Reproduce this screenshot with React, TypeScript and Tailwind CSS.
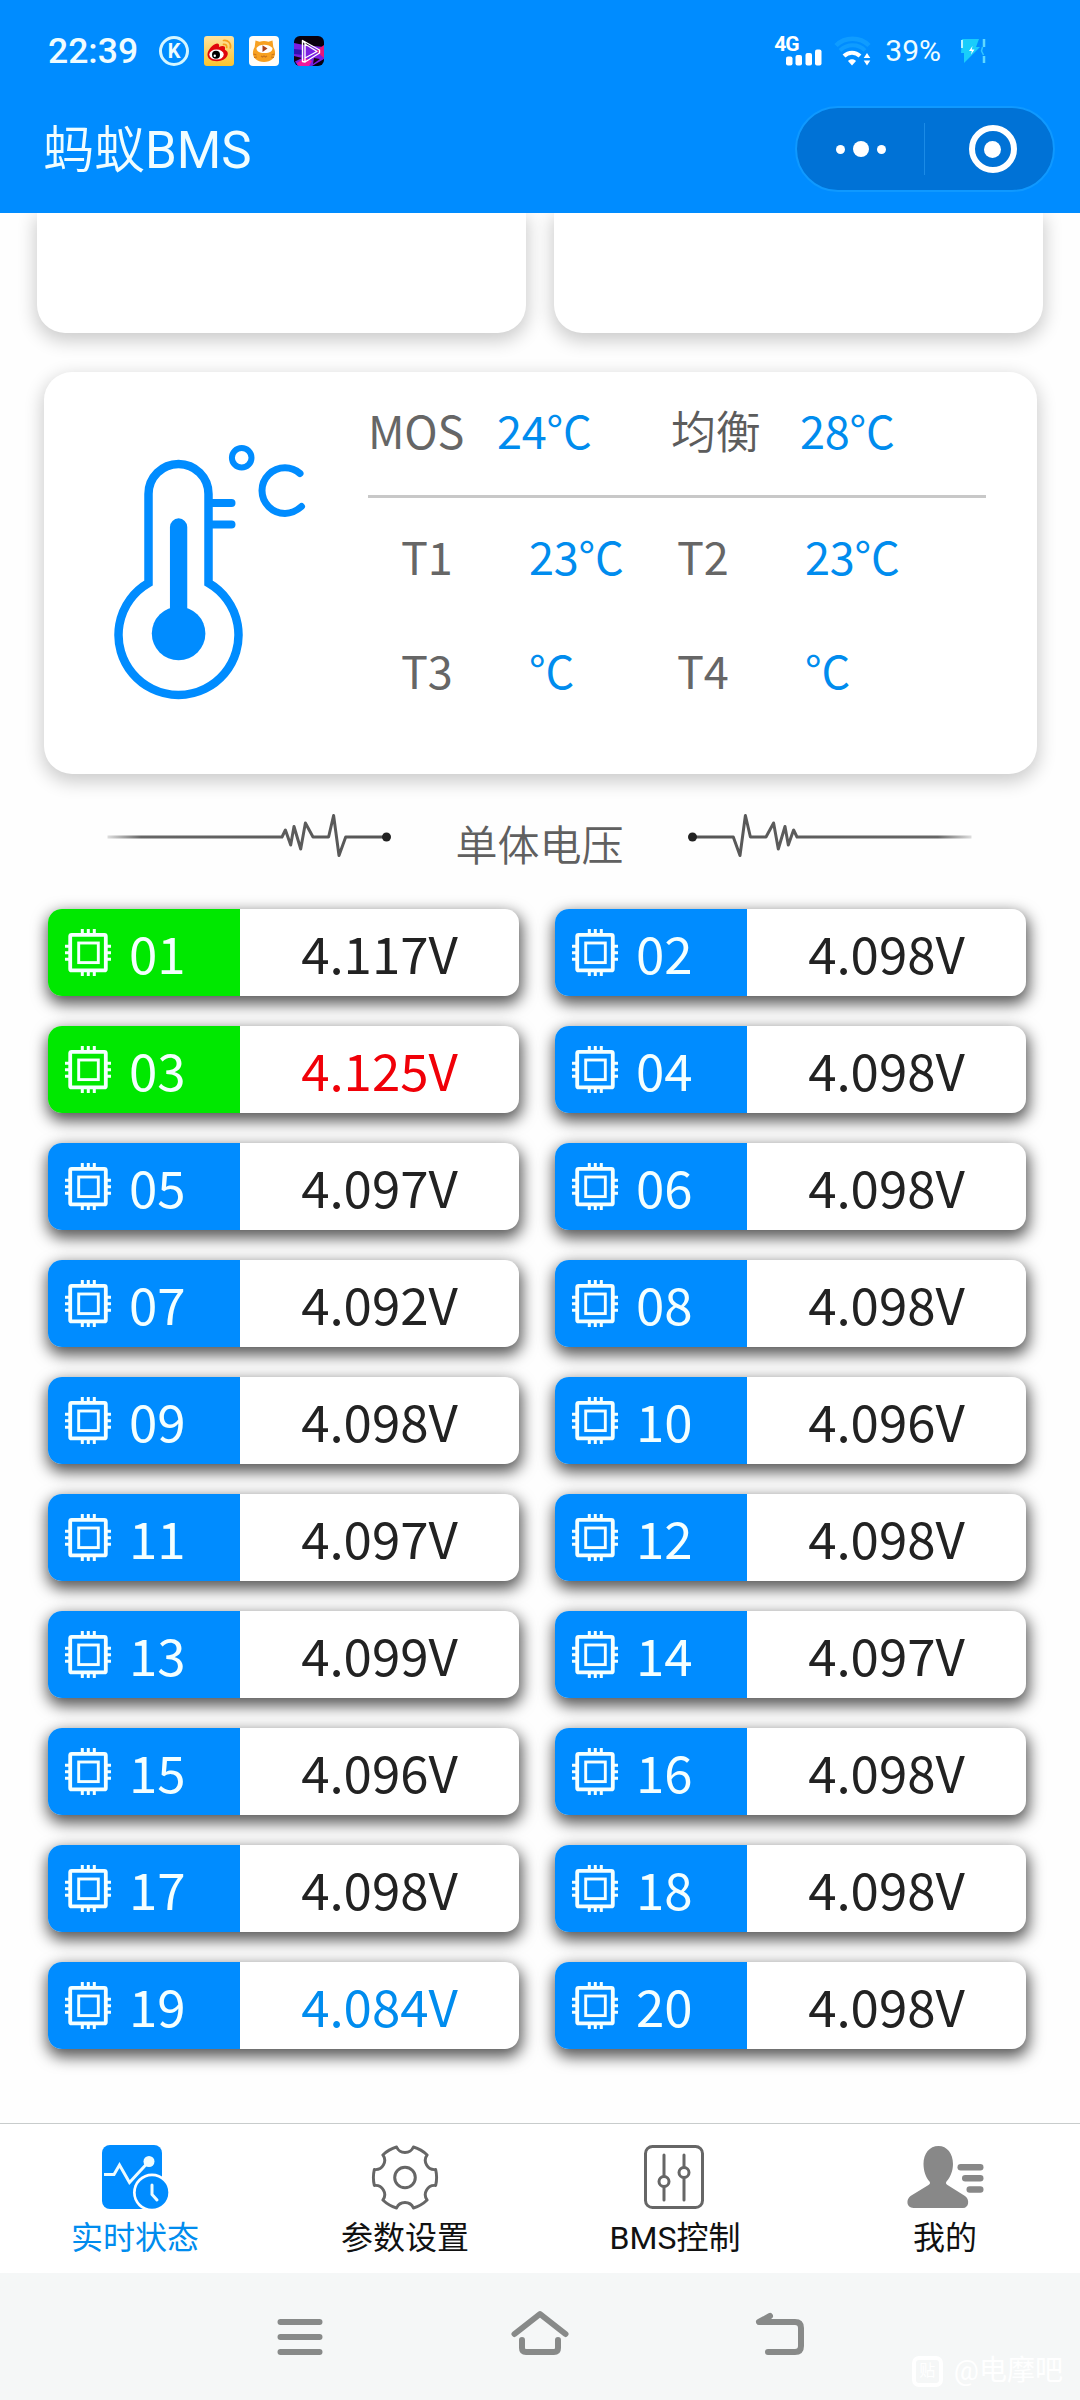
import React from "react";

type Tone = "normal" | "max" | "min";

type Cell = {
  id: string;
  voltage: string;
  balancing?: boolean;
  tone?: Tone;
};

const cells: Cell[] = [
  { id: "01", voltage: "4.117V", balancing: true },
  { id: "02", voltage: "4.098V" },
  { id: "03", voltage: "4.125V", balancing: true, tone: "max" },
  { id: "04", voltage: "4.098V" },
  { id: "05", voltage: "4.097V" },
  { id: "06", voltage: "4.098V" },
  { id: "07", voltage: "4.092V" },
  { id: "08", voltage: "4.098V" },
  { id: "09", voltage: "4.098V" },
  { id: "10", voltage: "4.096V" },
  { id: "11", voltage: "4.097V" },
  { id: "12", voltage: "4.098V" },
  { id: "13", voltage: "4.099V" },
  { id: "14", voltage: "4.097V" },
  { id: "15", voltage: "4.096V" },
  { id: "16", voltage: "4.098V" },
  { id: "17", voltage: "4.098V" },
  { id: "18", voltage: "4.098V" },
  { id: "19", voltage: "4.084V", tone: "min" },
  { id: "20", voltage: "4.098V" },
];

const toneClass: Record<Tone, string> = {
  normal: "text-[#222222]",
  max: "text-[#f00008]",
  min: "text-[#008cee]",
};

const WeiboIcon = () => (
  <svg width="30" height="30" viewBox="0 0 30 30">
    <defs>
      <linearGradient id="weibo" x1="0" y1="0" x2="0" y2="1">
        <stop offset="0" stopColor="#fde3a0" />
        <stop offset="1" stopColor="#fbc42c" />
      </linearGradient>
    </defs>
    <rect width="30" height="30" rx="3" fill="url(#weibo)" />
    <path
      d="M3.500 18.500C3.500 14 9 8 13 7.500c2 0 2.500 1.500 2 3.500 3-1.500 6.500-1.500 6 1.500-.2 1-.2 1.500 1 2C26 16.500 23.500 25 13 25.200 7 25.200 3.500 22.500 3.500 18.500Z"
      fill="#e0060c"
    />
    <ellipse cx="12.500" cy="18.600" rx="7.200" ry="5" fill="#fff" />
    <circle cx="12" cy="18.800" r="4" fill="#000" />
    <circle cx="10.800" cy="19.800" r="1.200" fill="#fff" />
    <path
      d="M19.500 4.500c4.500-.8 8 3 6.800 7.500M19.500 8.300c2-.3 3.600 1 3.200 3.200"
      fill="none"
      stroke="#f5a01c"
      strokeWidth="1.700"
      strokeLinecap="round"
    />
  </svg>
);

const CatIcon = () => (
  <svg width="30" height="30" viewBox="0 0 30 30">
    <rect width="30" height="30" rx="4" fill="#fffdf8" />
    <path
      d="M6.500 4.500l4 1.200c3-1 6-1 9 0l4-1.200.8 6.500c2.500 4 2.500 9-.8 12-4 4-13 4-17 0-3.300-3-3.300-8-.8-12Z"
      fill="#f7a01f"
    />
    <path d="M7.500 12C10 7.500 20 7.500 23.500 12 23.500 15.500 21 17 15.500 17S7.500 15.500 7.500 12Z" fill="#fff" />
    <path d="M13.500 9.200l5 3.300-5 3.400Z" fill="#a8401c" />
    <path
      d="M4.500 18l3 1M5 21.500l3-.5M25.500 18l-3 1M25 21.500l-3-.5M12 20l1.500 1 1.500-1 1.500 1 1.500-1"
      stroke="#c8741c"
      strokeWidth="1.200"
      fill="none"
    />
  </svg>
);

const PlayerIcon = () => (
  <svg width="30" height="30" viewBox="0 0 30 30">
    <defs>
      <clipPath id="player">
        <rect width="30" height="30" rx="6" />
      </clipPath>
    </defs>
    <g clipPath="url(#player)">
      <rect width="30" height="30" fill="#08000f" />
      <path d="M0 7l10 2 20 2v12L18 30H4L0 24Z" fill="#7a1fe0" />
      <path d="M0 13l9 1v5l-9-1Z" fill="#3410b0" />
      <path d="M30 9l-8 6 8 7Z" fill="#e8187c" />
      <path d="M3 27l8-5 7 3-3 5H4Z" fill="#f0189c" />
      <path d="M0 20l8 2-8 4ZM20 22l6 1-7 5Z" fill="#18000f" />
      <path
        d="M8.500 4.500v21L11 26V7Zm0 0L25.500 14v3L11 26M11 8l12 7.500L11 22"
        fill="none"
        stroke="#fff"
        strokeWidth="1.400"
        strokeLinejoin="round"
      />
    </g>
  </svg>
);

const StatusBar = () => {
  return (
    <div className="flex h-[102px] items-center pl-12 pr-[93px] text-[#effcff]">
      <span className="w-[111px] text-[35.5px] leading-[36px] font-medium">22:39</span>
      <div className="flex gap-[15px]">
        <span className="flex h-[30px] w-[30px] items-center justify-center rounded-full border-[3px] border-[#d4f6ff] text-xl leading-none font-bold">
          K
        </span>
        <WeiboIcon />
        <CatIcon />
        <PlayerIcon />
      </div>
      <div className="ml-auto flex items-center">
        <div className="relative h-[30px] w-[49px]">
          <span className="absolute -top-[1px] -left-[1px] text-[21px] leading-[18px] font-bold tracking-[-1px] text-white">4G</span>
          <svg className="absolute bottom-0 left-[11px]" width="37" height="18" viewBox="0 0 37 18" fill="#fff">
            <rect x="0" y="8.500" width="6.500" height="9" rx="2" />
            <rect x="9.500" y="7" width="6.500" height="10.500" rx="2" />
            <rect x="19.500" y="5" width="6.500" height="12.500" rx="2" />
            <rect x="29" y="1.500" width="6.500" height="16" rx="2" />
          </svg>
        </div>
        <svg className="ml-[10px]" width="38" height="30" viewBox="0 0 38 30" fill="none">
          <path d="M2 9.500C11 .5 26 .5 35 9.500" stroke="#0f9cff" strokeWidth="4.500" />
          <path d="M6 14.500c7-7 18.500-7 25 0" stroke="#0f9cff" strokeWidth="4" />
          <path d="M10 20c4.500-4.500 11.500-4.500 16 0" stroke="#fff" strokeWidth="4" />
          <path d="M14 25c2-2.300 6-2.300 8 0l-4 4.500Z" fill="#fff" />
          <path d="M33 17l3.300 5h-6.600ZM33 29.500l3.300-5h-6.600Z" fill="#fff" />
        </svg>
        <span className="ml-[13px] text-[30px] leading-[30px]">39%</span>
        <svg className="ml-[19px]" width="27" height="26" viewBox="0 0 27 26">
          <path d="M2 1h17l-3 8h4L4 25V15H1Z" fill="#19cdfb" />
          <path d="M2 2v8" stroke="#b8f4ff" strokeWidth="2" />
          <path d="M12.500 8L9 13h2.800l-.8 3.500 3.500-5h-2.700Z" fill="#fff" />
          <path d="M24 1v8M24 18v7" stroke="#5fd8ff" strokeWidth="2.500" />
          <path d="M22.500 9l-1 4 2 4" stroke="#30c4ff" strokeWidth="1.500" fill="none" />
        </svg>
      </div>
    </div>
  );
};

const TitleBar = () => {
  return (
    <div className="flex h-[111px] items-start justify-between pl-[43px] pr-[25px]">
      <h1 className="pt-[19px] text-[51px] leading-[60px] font-normal text-[#f0fdff]">
        <span className="font-[350]">蚂蚁</span>BMS
      </h1>
      <div className="mt-1 flex h-[86px] w-[260px] items-center rounded-full border-2 border-[#0f99ff] bg-[#0072d6]">
        <div className="flex w-[127px] items-center justify-center gap-2">
          <span className="h-[9px] w-[9px] rounded-full bg-white" />
          <span className="h-4 w-4 rounded-full bg-white" />
          <span className="h-[9px] w-[9px] rounded-full bg-white" />
        </div>
        <span className="h-[52px] w-px bg-[#1b8be6]" />
        <div className="flex flex-1 items-center justify-center pl-[7px]">
          <span className="flex h-12 w-12 items-center justify-center rounded-full border-[6px] border-white">
            <span className="h-[17px] w-[17px] rounded-full bg-white" />
          </span>
        </div>
      </div>
    </div>
  );
};

const Thermometer = () => (
  <svg width="200" height="264" viewBox="110 440 200 264" fill="none" stroke="#008cff">
    <path
      d="M148.500 583V494a30 30 0 0 1 60 0V583A60 60 0 1 1 148.500 583Z"
      strokeWidth="8.500"
      strokeLinejoin="miter"
    />
    <path d="M178.600 527V634" strokeWidth="17.300" strokeLinecap="round" />
    <circle cx="178.600" cy="633.500" r="26.800" fill="#008cff" stroke="none" />
    <path d="M210 503H231.500M210 524.500H231.500" strokeWidth="8" strokeLinecap="round" />
    <circle cx="241.700" cy="457.700" r="9.800" strokeWidth="6" />
    <path
      d="M300 473.500C296 470 291 467.800 285 467.800A23 22.800 0 0 0 285 513.400C292 513.400 297 510.500 301.500 506.500"
      strokeWidth="7"
      strokeLinecap="round"
    />
  </svg>
);

const TempCard = () => {
  return (
    <section className="ml-[44px] flex h-[402px] w-[993px] rounded-[28px] bg-white pt-[28px] shadow-[0_6px_18px_2px_rgba(0,0,0,0.2)]">
      <div className="w-[324px] pl-[66px] pt-[40px]">
        <Thermometer />
      </div>
      <div className="w-[618px] font-[family-name:'Noto_Sans_CJK_SC',sans-serif] text-[45px] leading-[60px] tracking-[-0.2px] text-[#666666]">
        <div className="grid h-[98px] grid-cols-[129px_174px_129px_1fr] border-b-[3px] border-[#c8c8c8]">
          <span>MOS</span>
          <span className="text-[#008cee]">24°C</span>
          <span className="font-[350] text-[#5c5c5c]">均衡</span>
          <span className="text-[#008cee]">28°C</span>
        </div>
        <div className="grid grid-cols-[128px_148px_128px_1fr] gap-y-[54px] pl-[33px] pt-[28px]">
          <span>T1</span>
          <span className="text-[#008cee]">23°C</span>
          <span>T2</span>
          <span className="text-[#008cee]">23°C</span>
          <span>T3</span>
          <span className="text-[#008cee]">°C</span>
          <span>T4</span>
          <span className="text-[#008cee]">°C</span>
        </div>
      </div>
    </section>
  );
};

const Pulse = ({ flip }: { flip?: boolean }) => (
  <svg
    className={flip ? "-scale-x-100" : ""}
    width="284"
    height="50"
    viewBox="107 812 284 50"
    fill="none"
  >
    <defs>
      <linearGradient id="fade" gradientUnits="userSpaceOnUse" x1="107" y1="0" x2="391" y2="0">
        <stop offset="0" stopColor="#666" stopOpacity="0.200" />
        <stop offset="0.120" stopColor="#666" />
        <stop offset="1" stopColor="#555" />
      </linearGradient>
    </defs>
    <path
      d="M107.500 837H282l3.400-7 5.300 15 3.300-18.500 6.700 22.500 4.700-26 7.600 14h15.600l5-21.500 5.400 40 6.700-18.500H386"
      stroke="url(#fade)"
      strokeWidth="3"
      strokeLinejoin="round"
    />
    <circle cx="386.500" cy="837" r="4.500" fill="#222" />
  </svg>
);

const ChipIcon = () => (
  <svg width="48" height="48" viewBox="0 0 48 48" fill="none" stroke="#f4ffff">
    <rect x="6.200" y="5.800" width="35.600" height="35.600" rx="1.500" strokeWidth="3.800" />
    <rect x="14.700" y="14" width="19.600" height="19.600" strokeWidth="2.900" />
    <path
      d="M18.300 0v5M24.300 0v5M30.300 0v5M18.300 42v5M24.300 42v5M30.300 42v5M1 17.200h4M1 23.700h4M1 30.200h4M43 17.200h4M43 23.700h4M43 30.200h4"
      strokeWidth="3"
    />
  </svg>
);

const CellRow = ({ cell }: { cell: Cell }) => {
  return (
    <div className="flex h-[87px] rounded-[14px] bg-white text-[51px] shadow-[1px_6px_15px_2px_rgba(0,0,0,0.66)]">
      <div
        className={`flex w-48 items-center rounded-l-[14px] pl-4 text-[#f4ffff] ${
          cell.balancing ? "bg-[#00e800]" : "bg-[#008cff]"
        }`}
      >
        <ChipIcon />
        <span className="ml-[17px]">{cell.id}</span>
      </div>
      <div className={`flex flex-1 items-center justify-center ${toneClass[cell.tone ?? "normal"]}`}>
        {cell.voltage}
      </div>
    </div>
  );
};

const StatusTabIcon = () => (
  <svg width="68" height="66" viewBox="0 0 68 66" fill="none">
    <rect x="1" y="0" width="60" height="64" rx="8" fill="#008cff" />
    <path d="M3 29.500h10l5.500-9.500 10 17.500L46.500 18" stroke="#eefcff" strokeWidth="3" />
    <circle cx="48" cy="16.500" r="5.500" fill="#eefcff" />
    <circle cx="51" cy="47.500" r="19" fill="#fff" />
    <circle cx="51" cy="47.500" r="16.300" fill="#008cff" />
    <path d="M51 40v9.500l5 5.500" stroke="#eefcff" strokeWidth="3" strokeLinecap="round" />
  </svg>
);

const GearTabIcon = () => (
  <svg width="68" height="66" viewBox="-34 -32.500 68 66" fill="none" stroke="#666" strokeWidth="3" strokeLinejoin="round">
    <path
      transform="scale(0.98)"
      d="M31.300-8.100Q33.200 0 31.300 8.100A9.400 9.400 0 0 0 22.600 23Q16.600 28.800 8.600 31.100A9.400 9.400 0 0 0-8.600 31.100Q-16.600 28.800-22.600 23A9.400 9.400 0 0 0-31.300 8.100Q-33.200 0-31.300-8.100A9.400 9.400 0 0 0-22.600-23Q-16.600-28.800-8.600-31.100A9.400 9.400 0 0 0 8.600-31.100Q16.600-28.800 22.600-23A9.400 9.400 0 0 0 31.300-8.100Z"
    />
    <circle cx="0" cy="0" r="10.300" />
  </svg>
);

const SliderTabIcon = () => (
  <svg width="68" height="66" viewBox="0 0 68 66" fill="none" stroke="#666" strokeWidth="3">
    <rect x="4.500" y="1.500" width="57" height="61" rx="7" />
    <path d="M23 10v45M43 10v45" strokeLinecap="round" />
    <circle cx="23" cy="36.500" r="5" fill="#fff" />
    <circle cx="43" cy="27.500" r="5" fill="#fff" />
  </svg>
);

const MineTabIcon = () => (
  <svg width="78" height="66" viewBox="0 0 78 66" fill="#888">
    <path d="M32.500 1C41 1 47 8.500 47 19c0 7-3 14-6.500 17.500-1 1.500-.5 2.500 1 3.500L59 51c5 3.500 4 12-2 12H7.500C0 63 0 54 4.500 51l18-11c1.500-1 2-2 1-3.500C20 33 17.500 26 17.500 19c0-10.500 6-18 15-18Z" />
    <rect x="51.500" y="19" width="26" height="6.500" rx="3.200" />
    <rect x="56" y="30" width="21.500" height="6.500" rx="3.200" />
    <rect x="60.500" y="41.300" width="17" height="6.500" rx="3.200" />
  </svg>
);

const tabs = [
  { label: "实时状态", icon: <StatusTabIcon />, active: true },
  { label: "参数设置", icon: <GearTabIcon /> },
  { label: "BMS控制", icon: <SliderTabIcon /> },
  { label: "我的", icon: <MineTabIcon /> },
];

const TabBar = () => {
  return (
    <nav className="grid h-[150px] grid-cols-4 border-t border-[#c8cccc] bg-white">
      {tabs.map((tab) => (
        <div key={tab.label} className="flex flex-col items-center pt-[21px]">
          {tab.icon}
          <span
            className={`mt-[7px] text-[32px] leading-[40px] font-[380] ${tab.active ? "text-[#008cee]" : "text-[#111111]"}`}
          >
            {tab.label}
          </span>
        </div>
      ))}
    </nav>
  );
};

const SystemNav = () => {
  return (
    <div className="relative flex h-[127px] items-start justify-center gap-[180px] bg-[#f5f7f7] pt-[34px]">
      <svg width="60" height="56" viewBox="0 0 60 56" fill="none" stroke="#888a89" strokeWidth="6" strokeLinecap="round">
        <path d="M10.500 15h39M10.500 30h39M10.500 45h39" />
      </svg>
      <svg width="60" height="56" viewBox="0 0 60 56" fill="none" stroke="#888a89" strokeWidth="6" strokeLinecap="round" strokeLinejoin="round">
        <path d="M4.500 27L30 7l25.500 20M12 33v8q0 4 4 4h28q4 0 4-4v-8" />
      </svg>
      <svg width="60" height="56" viewBox="0 0 60 56" fill="none" stroke="#888a89" strokeWidth="6" strokeLinecap="round" strokeLinejoin="round">
        <path d="M20 9L9 15h36q6 0 6 6v18q0 6-6 6H18" />
      </svg>
      <div className="absolute right-[17px] bottom-[11px] flex items-center gap-[11px] text-[28px] leading-[36px] text-white">
        <span className="flex h-[31px] w-[31px] items-center justify-center rounded-[7px] border-[4px] border-white text-[16px] leading-none">
          贴
        </span>
        <span>@电摩吧</span>
      </div>
    </div>
  );
};

const App = () => {
  return (
    <div className="h-[2400px] w-[1080px] overflow-hidden bg-[#fefefe] font-[family-name:Roboto,'Noto_Sans_CJK_SC',sans-serif]">
      <header className="h-[213px] bg-[#008cff]">
        <StatusBar />
        <TitleBar />
      </header>

      <main className="h-[1910px] overflow-hidden">
        <div className="flex gap-[28px] pl-[37px]">
          <div className="h-[120px] w-[489px] rounded-b-[28px] bg-white shadow-[0_6px_18px_2px_rgba(0,0,0,0.2)]" />
          <div className="h-[120px] w-[489px] rounded-b-[28px] bg-white shadow-[0_6px_18px_2px_rgba(0,0,0,0.2)]" />
        </div>

        <div className="mt-[39px]">
          <TempCard />
        </div>

        <div className="mt-[38px] flex h-[97px] items-start justify-between pl-[107px] pr-[108px]">
          <Pulse />
          <h2 className="pt-[14px] text-[42px] leading-[42px] font-[350] text-[#606060]">单体电压</h2>
          <Pulse flip />
        </div>

        <div className="grid grid-cols-[471px_471px] gap-x-[36px] gap-y-[30px] pl-[48px] font-[family-name:'Noto_Sans_CJK_SC',sans-serif]">
          {cells.map((cell) => (
            <CellRow key={cell.id} cell={cell} />
          ))}
        </div>
      </main>

      <TabBar />
      <SystemNav />
    </div>
  );
};

export default App;
